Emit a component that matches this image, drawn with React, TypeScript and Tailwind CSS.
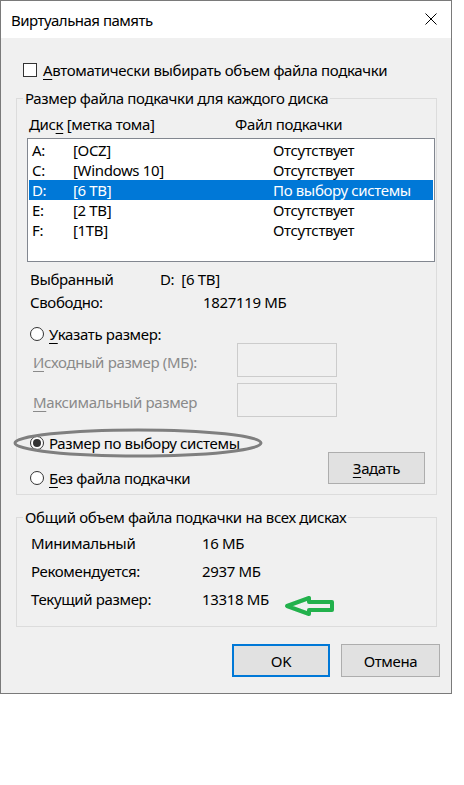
import React from "react";

const FONT = { fontFamily: '"Noto Sans", "Open Sans", "Liberation Sans", sans-serif' };

type Drive = { letter: string; label: string; file: string; selected?: boolean };

const drives: Drive[] = [
  { letter: "A:", label: "[OCZ]", file: "Отсутствует" },
  { letter: "C:", label: "[Windows 10]", file: "Отсутствует" },
  { letter: "D:", label: "[6 TB]", file: "По выбору системы", selected: true },
  { letter: "E:", label: "[2 TB]", file: "Отсутствует" },
  { letter: "F:", label: "[1TB]", file: "Отсутствует" },
];

function Radio({ checked }: { checked?: boolean }) {
  return (
    <span className="w-[14px] h-[14px] rounded-full border border-[#333333] bg-white flex items-center justify-center shrink-0">
      {checked && <span className="w-[8px] h-[8px] rounded-full bg-[#333333]" />}
    </span>
  );
}

function Mn({ children }: { children: React.ReactNode }) {
  return <span className="underline underline-offset-[3px] decoration-1">{children}</span>;
}

export default function App() {
  return (
    <div className="w-[464px] h-[785px] bg-white text-black text-[15px] leading-[20px] tracking-[-0.35px]" style={FONT}>
      <div className="relative w-[452px] h-[694px] border border-[#7a7a7a] bg-[#f0f0f0] flex flex-col">
        {/* title bar */}
        <div className="h-[37px] bg-white flex items-center justify-between pl-[10px] pr-[14px] shrink-0">
          <span className="text-[15px] tracking-[-0.5px]">Виртуальная память</span>
          <svg width="12" height="12" viewBox="0 0 12 12" className="mt-[-2px]">
            <path d="M0.5 0.5 L11.5 11.5 M11.5 0.5 L0.5 11.5" stroke="#000" strokeWidth="1" />
          </svg>
        </div>

        <div className="flex flex-col pl-[15px] pr-[14px]">
          {/* auto checkbox */}
          <div className="mt-[22px] h-[20px] flex items-center pl-[7px] gap-[6px]">
            <span className="w-[14px] h-[14px] border border-[#333333] bg-white shrink-0" />
            <span>
              <Mn>А</Mn>втоматически выбирать объем файла подкачки
            </span>
          </div>

          {/* per-drive group */}
          <div className="relative mt-[18px] h-[397px] border border-[#dcdcdc] flex flex-col pl-[10px] pr-[1px]">
            <span className="absolute -top-[11px] left-[6px] px-[2px] bg-[#f0f0f0]">
              Размер файла подкачки для каждого диска
            </span>

            <div className="mt-[15px] h-[20px] flex pl-[2px]">
              <span className="w-[206px]">
                Дис<Mn>к</Mn> [метка тома]
              </span>
              <span>Файл подкачки</span>
            </div>

            <div className="mt-[4px] h-[124px] border border-[#828790] bg-white p-[1px]">
              {drives.map((d) => (
                <div
                  key={d.letter}
                  className={
                    d.selected
                      ? "h-[20px] flex items-center bg-[#0078d7] text-white pl-[3px]"
                      : "h-[20px] flex items-center pl-[3px]"
                  }
                >
                  <span className="w-[41px]">{d.letter}</span>
                  <span className="w-[200px]">{d.label}</span>
                  <span>{d.file}</span>
                </div>
              ))}
            </div>

            <div className="mt-[7px] h-[20px] flex items-center pl-[3px]">
              <span className="w-[130px]">Выбранный</span>
              <span>D:&nbsp;&nbsp;[6 TB]</span>
            </div>
            <div className="mt-[3px] h-[20px] flex items-center pl-[3px]">
              <span className="w-[173px]">Свободно:</span>
              <span>1827119 МБ</span>
            </div>

            <div className="mt-[12px] h-[19px] flex items-center pl-[3px] gap-[5px]">
              <Radio />
              <span>
                <Mn>У</Mn>казать размер:
              </span>
            </div>

            <div className="h-[34px] flex items-center pl-[6px] text-[#8a8a8a]">
              <span className="w-[204px] mt-[4px]">
                <Mn>И</Mn>сходный размер (МБ):
              </span>
              <span className="w-[100px] h-[34px] border border-[#cccccc] bg-[#f0f0f0]" />
            </div>
            <div className="mt-[6px] h-[34px] flex items-center pl-[6px] text-[#8a8a8a]">
              <span className="w-[204px] mt-[4px]">
                <Mn>М</Mn>аксимальный размер
              </span>
              <span className="w-[100px] h-[34px] border border-[#cccccc] bg-[#f0f0f0]" />
            </div>

            <div className="mt-[16px] h-[19px] flex items-center pl-[3px] gap-[5px]">
              <Radio checked />
              <span>
                <Mn>Р</Mn>азмер по выбору системы
              </span>
            </div>

            <div className="flex items-start justify-between pr-[10px]">
              <div className="mt-[16px] h-[20px] flex items-center pl-[3px] gap-[5px]">
                <Radio />
                <span>
                  <Mn>Б</Mn>ез файла подкачки
                </span>
              </div>
              <div className="w-[97px] h-[32px] border border-[#adadad] bg-[#e1e1e1] flex items-center justify-center">
                <span>
                  <Mn>З</Mn>адать
                </span>
              </div>
            </div>
          </div>

          {/* totals group */}
          <div className="relative mt-[22px] h-[110px] border border-[#dcdcdc] flex flex-col gap-[8px] pt-[15px] pl-[14px]">
            <span className="absolute -top-[11px] left-[6px] px-[2px] bg-[#f0f0f0]">
              Общий объем файла подкачки на всех дисках
            </span>
            <div className="h-[20px] flex items-center">
              <span className="w-[171px]">Минимальный</span>
              <span>16 МБ</span>
            </div>
            <div className="h-[20px] flex items-center">
              <span className="w-[171px]">Рекомендуется:</span>
              <span>2937 МБ</span>
            </div>
            <div className="h-[20px] flex items-center">
              <span className="w-[171px]">Текущий размер:</span>
              <span>13318 МБ</span>
            </div>
          </div>

          {/* dialog buttons */}
          <div className="mt-[17px] flex justify-end gap-[11px] mr-[-3px]">
            <div className="w-[98px] h-[33px] border-2 border-[#0078d7] bg-[#e1e1e1] flex items-center justify-center">
              OK
            </div>
            <div className="w-[99px] h-[33px] border border-[#adadad] bg-[#e1e1e1] flex items-center justify-center">
              Отмена
            </div>
          </div>
        </div>

        {/* hand-drawn markup on top of the dialog */}
        <svg className="absolute left-[10px] top-[425px]" width="256" height="35" viewBox="0 0 256 35">
          <ellipse cx="127" cy="17" rx="123" ry="13" fill="none" stroke="#7f7f7f" strokeWidth="3" />
        </svg>
        <svg className="absolute left-[282px] top-[593px]" width="56" height="26" viewBox="0 0 56 26">
          <path
            d="M4 12 L26 4 L26 8 L49 8 L49 16 L26 16 L26 20 Z"
            fill="none"
            stroke="#22b14c"
            strokeWidth="4"
            strokeLinejoin="round"
          />
        </svg>
      </div>
    </div>
  );
}
